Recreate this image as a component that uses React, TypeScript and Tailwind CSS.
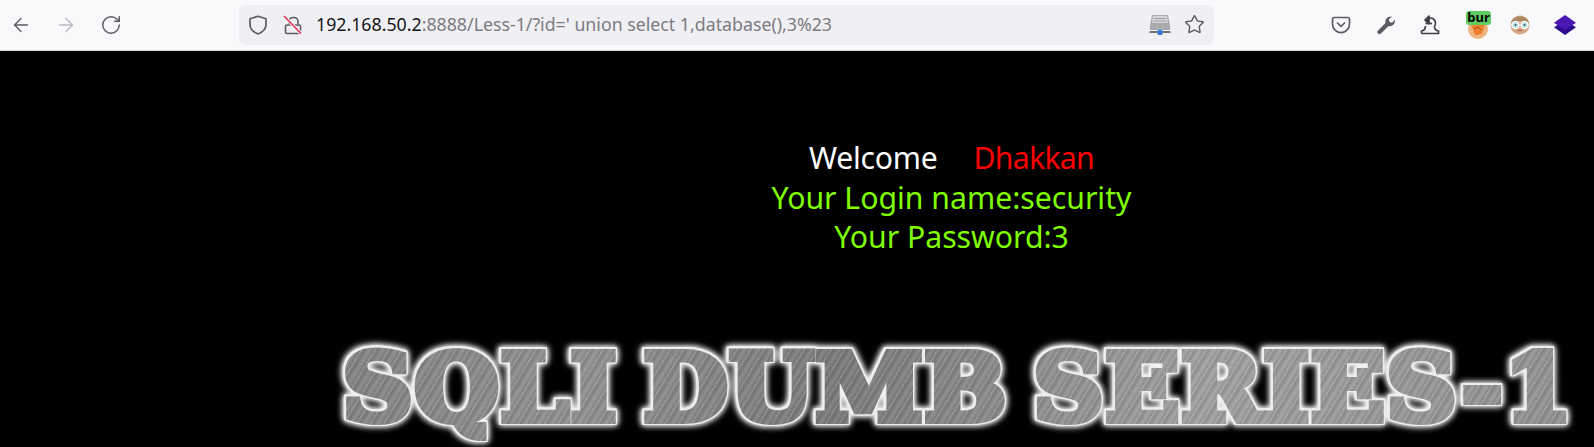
import { ArrowLeft, ArrowRight, RotateCw, Star } from "lucide-react";

function ShieldIcon() {
  return (
    <svg width="20" height="20" viewBox="0 0 20 20" fill="none" stroke="#5b5b66" strokeWidth="1.7">
      <path d="M10 1.2 L18 3.8 V9.5 C18 14 14.4 17.2 10 19 C5.6 17.2 2 14 2 9.5 V3.8 Z" strokeLinejoin="round" />
    </svg>
  );
}

function LockSlashIcon() {
  return (
    <svg width="20" height="20" viewBox="0 0 20 20" fill="none" strokeWidth="1.6">
      <path d="M6 9.5 V6.5 C6 1.2 15 1.2 15 6.5 V9.5" stroke="#5b5b66" />
      <rect x="2.5" y="10" width="15" height="8.5" rx="1.5" stroke="#5b5b66" />
      <path d="M1 1 L18 18.5" stroke="#f0f0f4" strokeWidth="3.5" />
      <path d="M1 1 L18 18.5" stroke="#e22850" strokeWidth="1.4" />
    </svg>
  );
}

function DriveIcon() {
  return (
    <svg width="22" height="22" viewBox="0 0 22 22">
      <path d="M3 1 H19 L21 11 V16 H1 V11 Z" fill="#a9abae" />
      <path d="M4 2 H18 L19 9 H3 Z" fill="#d5d6d8" />
      <path d="M5 4.5 H17 M4.5 7 H17.5" stroke="#a3a5a8" />
      <rect x="0.5" y="17" width="21" height="2" fill="#6f7276" />
      <rect x="8.5" y="16" width="5" height="5" rx="1" fill="#3a78e0" />
    </svg>
  );
}

function PocketIcon() {
  return (
    <svg width="20" height="20" viewBox="0 0 20 20" fill="none" stroke="#5b5b66" strokeWidth="1.7">
      <path d="M3.5 2.5 H16.5 C17.6 2.5 18.5 3.4 18.5 4.5 V9 C18.5 14 14.5 17.7 10 17.7 C5.5 17.7 1.5 14 1.5 9 V4.5 C1.5 3.4 2.4 2.5 3.5 2.5 Z" />
      <path d="M6.5 8 L10 11.3 L13.5 8" strokeLinecap="round" strokeLinejoin="round" />
    </svg>
  );
}

function WrenchIcon() {
  return (
    <svg width="20" height="20" viewBox="0 0 20 20" fill="#5b5b66">
      <path d="M2 15.5 L9.5 8 C8.6 4.6 11.6 1 15.8 1.6 L12.8 4.6 L13.6 7 L16 7.8 L19 4.8 C19.5 9 16 12 12.6 11 L5 18.6 C4.2 19.4 3 19.4 2.2 18.6 L1.8 18.2 C1.2 17.4 1.2 16.4 2 15.5 Z" />
    </svg>
  );
}

function HatIcon() {
  return (
    <svg width="20" height="20" viewBox="0 0 20 20" fill="none" stroke="#3f3f48" strokeWidth="1.7">
      <path d="M1.5 18.5 H18.5 V16 C15.5 15.5 14.5 14 14.5 11.5 C16.5 9 15.5 3 10.5 3 H8" />
      <path d="M1.5 18.5 V16 C4.5 15.5 5.5 14 5.5 11" />
      <path d="M5.5 8.5 H12" />
      <path d="M9 1 L5 5 L9 8.5 Z" fill="#3f3f48" strokeLinejoin="round" />
    </svg>
  );
}

function BurIcon() {
  return (
    <div className="relative h-[28px] w-[26px]">
      <svg className="absolute left-[2px] top-[8px]" width="20" height="20" viewBox="0 0 20 20">
        <circle cx="10" cy="10" r="10" fill="#eeb27c" />
        <path d="M3 5 H17 L14 15 L7 16 Z" fill="#ee7f2d" />
        <path d="M6 10 L10 8 L13 11" stroke="#8a4a1c" fill="none" />
      </svg>
      <div className="absolute left-0 top-0 flex h-[14px] w-[25px] items-center justify-center rounded-[3px] bg-[#5fcb63] font-['Noto_Sans',sans-serif] text-[13px] font-bold leading-none text-black">
        bur
      </div>
    </div>
  );
}

function FaceIcon() {
  return (
    <svg width="20" height="20" viewBox="0 0 20 20">
      <circle cx="10" cy="10" r="9.5" fill="#d9a883" />
      <path d="M1 9 C1 -1 19 -1 19 9 C15 5 5 5 1 9 Z" fill="#a98a63" />
      <circle cx="5.5" cy="10" r="3.6" fill="#bfe3e6" stroke="#fff" strokeWidth="1.3" />
      <circle cx="14.5" cy="10" r="3.6" fill="#bfe3e6" stroke="#fff" strokeWidth="1.3" />
      <circle cx="5.5" cy="10" r="1" fill="#35505a" />
      <circle cx="14.5" cy="10" r="1" fill="#35505a" />
      <path d="M7.5 15.5 H12.5" stroke="#b0654f" strokeWidth="1.2" />
    </svg>
  );
}

function LayersIcon() {
  return (
    <svg width="22" height="22" viewBox="0 0 20 20">
      <path d="M0 12 L10 6 L20 12 L10 19 Z" fill="#2a0a8e" />
      <path d="M0 8 L10 1 L20 8 L10 14.5 Z" fill="#4a17b5" />
    </svg>
  );
}

export default function App() {
  return (
    <div className="flex h-[447px] w-[1594px] flex-col overflow-hidden bg-black">
      {/* Browser toolbar */}
      <div className="flex h-[51px] shrink-0 items-center border-b border-[#cfcfd3] bg-[#f9f9fb] pb-[1px] font-['Noto_Sans',sans-serif]">
        <div className="flex w-[239px] shrink-0 items-center gap-[23px] pl-[10px]">
          <ArrowLeft size={22} strokeWidth={1.5} className="text-[#5b5b66]" />
          <ArrowRight size={22} strokeWidth={1.5} className="text-[#b9b9be]" />
          <RotateCw size={22} strokeWidth={1.6} className="text-[#5b5b66]" />
        </div>

        {/* URL bar */}
        <div className="flex h-[40px] w-[975px] shrink-0 items-center rounded-[6px] bg-[#f0f0f4] pl-[9px]">
          <ShieldIcon />
          <div className="ml-[15px]">
            <LockSlashIcon />
          </div>
          <div className="ml-[13px] text-[17.75px] leading-none text-[#7b7b82]">
            <span className="text-[#15141a]">192.168.50.2</span>:8888/Less-1/?id=' union select 1,database(),3%23
          </div>
          <div className="ml-auto flex items-center gap-[13px] pr-[9px]">
            <DriveIcon />
            <Star size={21} strokeWidth={1.6} className="text-[#5b5b66]" />
          </div>
        </div>

        {/* Extensions */}
        <div className="ml-[117px] flex items-center">
          <PocketIcon />
          <div className="ml-[25px]">
            <WrenchIcon />
          </div>
          <div className="ml-[24px]">
            <HatIcon />
          </div>
          <div className="ml-[26px]">
            <BurIcon />
          </div>
          <div className="ml-[18px]">
            <FaceIcon />
          </div>
          <div className="ml-[24px]">
            <LayersIcon />
          </div>
        </div>
      </div>

      {/* Page */}
      <div className="flex flex-1 flex-col">
        <div className="flex flex-col items-center pl-[309px] pt-[87px] font-['Noto_Sans',sans-serif] text-[30.2px] leading-[39.5px] text-[#7fff00]">
          <div>
            <span className="tracking-[-0.25px] text-white">Welcome</span>
            <span className="ml-[36px] tracking-[-0.7px] text-[#ff0000]">Dhakkan</span>
          </div>
          <div>Your Login name:security</div>
          <div>Your Password:3</div>
        </div>

        <div className="mt-[86px] pl-[343px]">
          <div className="origin-left scale-x-[1.055] whitespace-nowrap font-['DejaVu_Serif',serif] text-[91px] font-bold leading-[91px] tracking-[2.4px] [word-spacing:-10px]">
            <span className="bg-[repeating-linear-gradient(120deg,rgba(255,255,255,0.16)_0px,rgba(0,0,0,0.12)_3px,rgba(255,255,255,0.08)_7px,rgba(0,0,0,0.1)_11px),linear-gradient(100deg,#858585_0%,#939393_20%,#7c7c7c_40%,#a3a3a3_70%,#939393_100%)] bg-clip-text text-transparent [-webkit-text-stroke:8px_transparent] [filter:drop-shadow(1.2px_0_0_#eeeeee)_drop-shadow(-1.2px_0_0_#eeeeee)_drop-shadow(0_1.2px_0_#eeeeee)_drop-shadow(0_-1.2px_0_#eeeeee)_drop-shadow(0_0_3px_#ffffff)_drop-shadow(0_0_2px_#bbbbbb)]">
              SQLI DUMB SERIES-1
            </span>
          </div>
        </div>
      </div>
    </div>
  );
}
